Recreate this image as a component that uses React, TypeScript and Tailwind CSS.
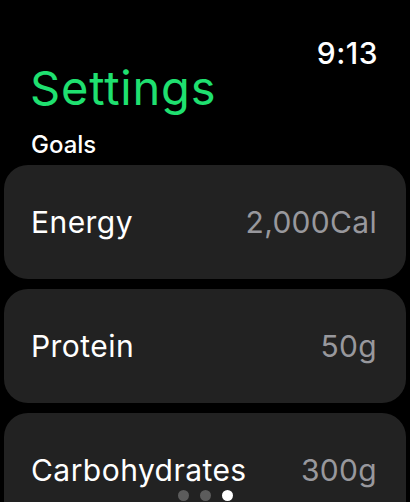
import React from "react";

const rows = [
  { label: "Energy", value: "2,000Cal" },
  { label: "Protein", value: "50g" },
  { label: "Carbohydrates", value: "300g" },
];

export default function App() {
  return (
    <div
      className="relative w-[410px] h-[502px] overflow-hidden bg-black text-white"
      style={{ fontFamily: "Inter, 'Noto Sans', 'Liberation Sans', sans-serif" }}
    >
      <div className="pt-[38px] flex justify-end pr-[32px] h-[64px]">
        <span className="text-[30px] leading-none font-medium tracking-[0.5px]">9:13</span>
      </div>
      <div className="pl-[30px] text-[47px] leading-none text-[#1fe070] tracking-[0.8px]">Settings</div>
      <div className="pl-[31px] mt-[22px] text-[24px] leading-none font-medium">Goals</div>
      <div className="mt-[8px] flex flex-col gap-[10px] px-[4px]">
        {rows.map((r) => (
          <div
            key={r.label}
            className="h-[114px] shrink-0 rounded-[24px] bg-[#222222] flex items-center justify-between pl-[27px] pr-[29px]"
          >
            <span className="text-[30px] leading-none tracking-[0.45px]">{r.label}</span>
            <span className="text-[30px] leading-none tracking-[0.3px] text-[#98989d]">{r.value}</span>
          </div>
        ))}
      </div>
      <div className="absolute bottom-[1px] left-0 right-0 flex justify-center gap-[11px]">
        <span className="w-[11px] h-[11px] rounded-full bg-[#5c5c5c]" />
        <span className="w-[11px] h-[11px] rounded-full bg-[#5c5c5c]" />
        <span className="w-[11px] h-[11px] rounded-full bg-white" />
      </div>
    </div>
  );
}
